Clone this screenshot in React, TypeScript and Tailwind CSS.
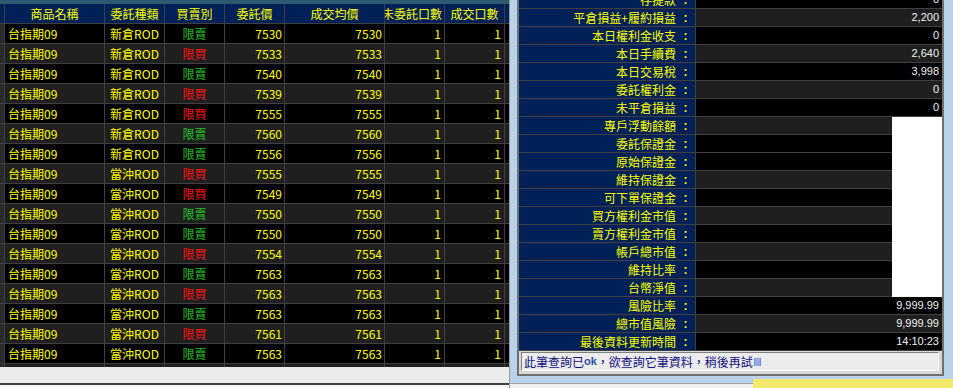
import React from "react";

type Order = { kind: string; side: string; price: string };

const orders: Order[] = [
  { kind: "新倉ROD", side: "限賣", price: "7530" },
  { kind: "新倉ROD", side: "限買", price: "7533" },
  { kind: "新倉ROD", side: "限賣", price: "7540" },
  { kind: "新倉ROD", side: "限買", price: "7539" },
  { kind: "新倉ROD", side: "限買", price: "7555" },
  { kind: "新倉ROD", side: "限賣", price: "7560" },
  { kind: "新倉ROD", side: "限賣", price: "7556" },
  { kind: "當沖ROD", side: "限買", price: "7555" },
  { kind: "當沖ROD", side: "限買", price: "7549" },
  { kind: "當沖ROD", side: "限賣", price: "7550" },
  { kind: "當沖ROD", side: "限賣", price: "7550" },
  { kind: "當沖ROD", side: "限買", price: "7554" },
  { kind: "當沖ROD", side: "限賣", price: "7563" },
  { kind: "當沖ROD", side: "限買", price: "7563" },
  { kind: "當沖ROD", side: "限賣", price: "7563" },
  { kind: "當沖ROD", side: "限買", price: "7561" },
  { kind: "當沖ROD", side: "限賣", price: "7563" },
];

type Item = { label: string; value?: string; dark: boolean; blank?: boolean };

const summary: Item[] = [
  { label: "存提款", value: "0", dark: true },
  { label: "平倉損益+履約損益", value: "2,200", dark: false },
  { label: "本日權利金收支", value: "0", dark: true },
  { label: "本日手續費", value: "2,640", dark: false },
  { label: "本日交易稅", value: "3,998", dark: true },
  { label: "委託權利金", value: "0", dark: false },
  { label: "未平倉損益", value: "0", dark: true },
  { label: "專戶浮動餘額", dark: false, blank: true },
  { label: "委託保證金", dark: true, blank: true },
  { label: "原始保證金", dark: true, blank: true },
  { label: "維持保證金", dark: false, blank: true },
  { label: "可下單保證金", dark: true, blank: true },
  { label: "買方權利金市值", dark: false, blank: true },
  { label: "賣方權利金市值", dark: true, blank: true },
  { label: "帳戶總市值", dark: false, blank: true },
  { label: "維持比率", dark: true, blank: true },
  { label: "台幣淨值", dark: false, blank: true },
  { label: "風險比率", value: "9,999.99", dark: true },
  { label: "總市值風險", value: "9,999.99", dark: false },
  { label: "最後資料更新時間", value: "14:10:23", dark: true },
];

function OrderTable() {
  return (
    <div className="flex flex-col">
      {/* header */}
      <div className="flex h-[19px] bg-[#002157] text-[#ffff00]">
        <div className="w-[4px]" />
        <div className="w-[100px] border-l border-[#404040] flex items-center justify-center">商品名稱</div>
        <div className="w-[60px] border-l border-[#404040] flex items-center justify-center">委託種類</div>
        <div className="w-[60px] border-l border-[#404040] flex items-center justify-center">買賣別</div>
        <div className="w-[60px] border-l border-[#404040] flex items-center justify-center">委託價</div>
        <div className="w-[100px] border-l border-[#404040] flex items-center justify-center">成交均價</div>
        <div className="w-[60px] border-l border-[#404040] flex items-center justify-end pr-[2px] overflow-hidden whitespace-nowrap">未委託口數</div>
        <div className="w-[60px] border-l border-[#404040] flex items-center justify-center">成交口數</div>
        <div className="flex-1 border-l border-[#404040]" />
      </div>

      {orders.map((o, i) => (
        <div
          key={i}
          className={`flex h-[20px] border-t border-[#404040] text-[#ffff00] ${i % 2 === 0 ? "bg-black" : "bg-[#1f1f1f]"}`}
        >
          <div className="w-[4px] bg-[#2a2a2a]" />
          <div className="w-[100px] border-l border-[#404040] flex items-center pl-[3px]">台指期09</div>
          <div className="w-[60px] border-l border-[#404040] flex items-center justify-center">{o.kind}</div>
          <div
            className={`w-[60px] border-l border-[#404040] flex items-center justify-center ${o.side === "限賣" ? "text-[#22c422]" : "text-[#ff1414]"}`}
          >
            {o.side}
          </div>
          <div className="w-[60px] border-l border-[#404040] flex items-center justify-end pr-[2px]">{o.price}</div>
          <div className="w-[100px] border-l border-[#404040] flex items-center justify-end pr-[2px]">{o.price}</div>
          <div className="w-[60px] border-l border-[#404040] flex items-center justify-end pr-[3px]">1</div>
          <div className="w-[60px] border-l border-[#404040] flex items-center justify-end pr-[3px]">1</div>
          <div className="flex-1 border-l border-[#404040]" />
        </div>
      ))}

      {/* partially visible next row */}
      <div className="flex h-[4px] border-t border-[#404040] bg-[#1f1f1f]">
        <div className="w-[4px] bg-[#2a2a2a]" />
        <div className="w-[100px] border-l border-[#404040]" />
        <div className="w-[60px] border-l border-[#404040]" />
        <div className="w-[60px] border-l border-[#404040]" />
        <div className="w-[60px] border-l border-[#404040]" />
        <div className="w-[100px] border-l border-[#404040]" />
        <div className="w-[60px] border-l border-[#404040]" />
        <div className="w-[60px] border-l border-[#404040]" />
        <div className="flex-1 border-l border-[#404040]" />
      </div>
    </div>
  );
}

function SummaryRow({ item }: { item: Item }) {
  const bg = item.dark ? "bg-black" : "bg-[#1f1f1f]";
  return (
    <div className="flex h-[18px]">
      <div className="w-[177px] border-r border-b border-[#404040] bg-[#002157] text-[#ffff00] flex items-center justify-end whitespace-nowrap">
        <span>{item.label}</span>
        <span className="w-[19px] text-center font-['Liberation_Sans',Arial,sans-serif] font-bold">:</span>
      </div>
      {item.blank ? (
        <div className="flex flex-1">
          <div className={`w-[196px] border-b border-[#404040] ${bg}`} />
          <div className="flex-1 bg-white" />
        </div>
      ) : (
        <div
          className={`flex-1 border-b border-[#404040] ${bg} flex items-center justify-end pr-[3px] text-[11px] text-[#f0f0f0] font-['Liberation_Sans',Arial,sans-serif]`}
        >
          {item.value}
        </div>
      )}
    </div>
  );
}

function SummaryDialog() {
  return (
    <div className="flex flex-col h-[379px] border-l border-[#9c9c9c] bg-[#b9d1ea] pl-[7px] pr-[9px] pb-[4px]">
      <div className="flex flex-col flex-1 border-l-2 border-r-2 border-b-2 border-[#707070] bg-[#d8d8d8]">
        <div className="overflow-hidden">
          <div className="-mt-[9px] flex flex-col">
            {summary.map((item, i) => (
              <SummaryRow key={i} item={item} />
            ))}
          </div>
        </div>
        <div className="pl-[2px] pr-[3px] pt-[1px] pb-[3px] bg-[#d8d8d8]">
          <div className="h-[19px] border border-t-[#808080] border-l-[#808080] border-b-white border-r-white bg-[#ececec] flex items-center pl-[2px] text-[#101080] whitespace-nowrap">
            <span>此筆查詢已</span>
            <span className="font-['Liberation_Sans',Arial,sans-serif] text-[11px] text-[#3050a8] font-bold">ok</span>
            <span>，欲查詢它筆資料，稍後再試</span>
            <svg width="7" height="10" viewBox="0 0 7 10" className="ml-[1px]">
              <rect x="0" y="1" width="7" height="8" fill="#6f8fd8" />
              <path d="M1 2h5M1 4h5M1 6h5M1 8h5" stroke="#c8d6f4" strokeWidth="0.8" />
            </svg>
          </div>
        </div>
      </div>
    </div>
  );
}

export default function App() {
  return (
    <div className="flex w-[953px] h-[388px] overflow-hidden bg-white text-[12px] leading-none font-['Noto_Sans_CJK_TC',sans-serif]">
      {/* left: order list */}
      <div className="flex flex-col w-[509px] shrink-0">
        <div className="h-[4px] bg-[#2c5a70]" />
        <OrderTable />
        <div className="h-[16px] bg-[#ececec]" />
        <div className="h-[2px] bg-[#404040]" />
        <div className="flex-1 bg-[#f8f8f8]" />
      </div>

      {/* right: account summary dialog */}
      <div className="flex flex-col flex-1">
        <SummaryDialog />
        <div className="flex flex-1">
          <div className="w-[244px] flex flex-col border-l border-[#9c9c9c]">
            <div className="h-[4px] bg-[#b9d1ea]" />
            <div className="flex-1 bg-[#f0f0f0] border-t border-[#a0a0a0]" />
          </div>
          <div className="flex-1 bg-[#f3ea6c]" />
        </div>
      </div>
    </div>
  );
}
